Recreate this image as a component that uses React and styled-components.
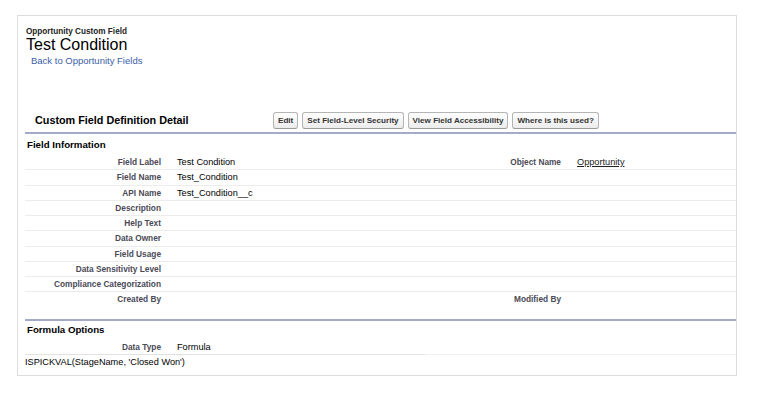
import React from "react";
import styled, { createGlobalStyle } from "styled-components";

const GlobalStyle = createGlobalStyle`
  body {
    margin: 0;
    background: #ffffff;
    font-family: "Liberation Sans", Arial, sans-serif;
  }
`;

const Frame = styled.div`
  width: 720px;
  height: 361px;
  box-sizing: border-box;
  margin: 15px 0 0 17px;
  border: 1px solid #dcdcdc;
  display: flex;
  flex-direction: column;
`;

const PageHeader = styled.div`
  padding: 11px 0 0 8px;
`;

const ObjectType = styled.div`
  font-size: 8.2px;
  line-height: 10px;
  font-weight: bold;
  color: #222;
`;

const PageTitle = styled.h1`
  margin: 0;
  font-size: 16px;
  line-height: 16px;
  font-weight: normal;
  color: #000;
`;

const BackLink = styled.a`
  display: block;
  margin: 2px 0 0 5px;
  font-size: 9.5px;
  line-height: 12px;
  color: #3b5ea6;
  text-decoration: none;
`;

const Detail = styled.div`
  margin: 41px 0 0 7px;
`;

const TitleBar = styled.div`
  display: flex;
  align-items: center;
  height: 24px;
`;

const BlockTitle = styled.h2`
  margin: 0;
  width: 238px;
  padding-left: 10px;
  font-size: 10.8px;
  font-weight: bold;
  color: #000;
`;

const Buttons = styled.div`
  display: flex;
  gap: 4px;
`;

const Button = styled.button`
  height: 17px;
  padding: 0 4px;
  font-family: "Liberation Sans", Arial, sans-serif;
  font-size: 8.1px;
  font-weight: bold;
  color: #333;
  background: linear-gradient(#ffffff, #ececec);
  border: 1px solid #b5b5b5;
  border-bottom-color: #9a9a9a;
  border-radius: 3px;
`;

const Section = styled.div`
  border-top: 2px solid #a3abc8;
  padding-bottom: ${(p) => p.$padBottom || 0}px;
`;

const SectionTitle = styled.h3`
  margin: 0;
  height: ${(p) => p.$height}px;
  line-height: ${(p) => p.$height}px;
  padding-left: 2px;
  font-size: 9.7px;
  font-weight: bold;
  color: #000;
`;

const Row = styled.div`
  display: grid;
  grid-template-columns: 144px 256px 144px 167px;
  align-items: center;
  height: 15.25px;
  box-sizing: border-box;
  border-bottom: 1px solid ${(p) => (p.$last ? "transparent" : "#ececec")};
`;

const Label = styled.div`
  text-align: right;
  padding-right: 8px;
  font-size: 8.3px;
  font-weight: bold;
  color: #4a4a56;
`;

const Value = styled.div`
  padding-left: 8px;
  font-size: 9.2px;
  color: #000;
`;

const ValueLink = styled.a`
  color: #222;
  text-decoration: underline;
`;

const FormulaRow = styled.div`
  display: grid;
  grid-template-columns: 144px 256px 1fr;
  align-items: center;
  height: 16px;
`;

const Divided = styled.div`
  height: 100%;
  display: flex;
  align-items: center;
  justify-content: ${(p) => (p.$right ? "flex-end" : "flex-start")};
  box-sizing: border-box;
  border-bottom: 1px solid ${(p) => (p.$light ? "#f1f1f1" : "#e2e2e2")};
`;

const Formula = styled.div`
  height: 14px;
  line-height: 14px;
  font-size: 9.2px;
  color: #000;
`;

const fields = [
  ["Field Label", "Test Condition", "Object Name", "Opportunity"],
  ["Field Name", "Test_Condition"],
  ["API Name", "Test_Condition__c"],
  ["Description"],
  ["Help Text"],
  ["Data Owner"],
  ["Field Usage"],
  ["Data Sensitivity Level"],
  ["Compliance Categorization"],
  ["Created By", "", "Modified By"],
];

export default function App() {
  return (
    <>
      <GlobalStyle />
      <Frame>
        <PageHeader>
          <ObjectType>Opportunity Custom Field</ObjectType>
          <PageTitle>Test Condition</PageTitle>
          <BackLink href="#">Back to Opportunity Fields</BackLink>
        </PageHeader>
        <Detail>
          <TitleBar>
            <BlockTitle>Custom Field Definition Detail</BlockTitle>
            <Buttons>
              <Button>Edit</Button>
              <Button>Set Field-Level Security</Button>
              <Button>View Field Accessibility</Button>
              <Button>Where is this used?</Button>
            </Buttons>
          </TitleBar>
          <Section $padBottom={11.5}>
            <SectionTitle $height={21}>Field Information</SectionTitle>
            {fields.map(([label, value, label2, value2], i) => (
              <Row key={label} $last={i === fields.length - 1}>
                <Label>{label}</Label>
                <Value>{value}</Value>
                <Label>{label2}</Label>
                <Value>{value2 && <ValueLink href="#">{value2}</ValueLink>}</Value>
              </Row>
            ))}
          </Section>
          <Section>
            <SectionTitle $height={18}>Formula Options</SectionTitle>
            <FormulaRow>
              <Divided $right>
                <Label>Data Type</Label>
              </Divided>
              <Divided>
                <Value>Formula</Value>
              </Divided>
              <Divided $light />
            </FormulaRow>
            <Formula>ISPICKVAL(StageName, 'Closed Won')</Formula>
          </Section>
        </Detail>
      </Frame>
    </>
  );
}
